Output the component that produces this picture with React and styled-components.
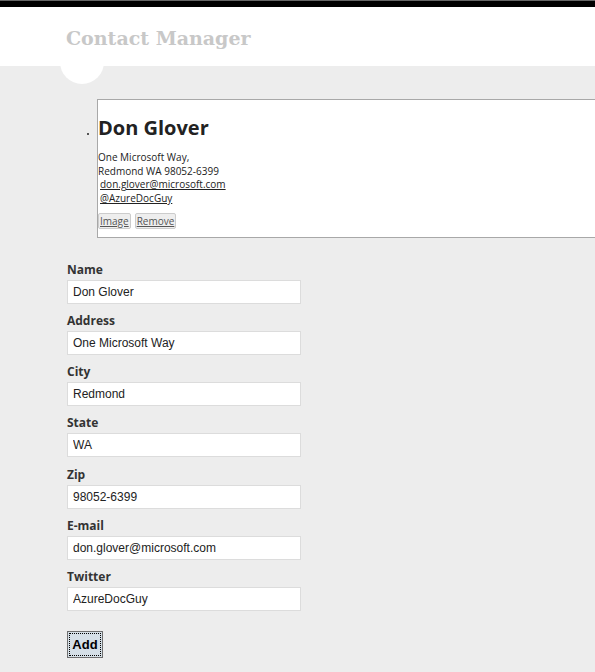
import React from 'react'
import styled, { createGlobalStyle } from 'styled-components'

const GlobalStyle = createGlobalStyle`
  html, body {
    margin: 0;
    padding: 0;
    background: #ededed;
    overflow-x: hidden;
  }
`

const contact = {
  name: 'Don Glover',
  address: 'One Microsoft Way',
  city: 'Redmond',
  state: 'WA',
  zip: '98052-6399',
  email: 'don.glover@microsoft.com',
  twitter: 'AzureDocGuy',
}

const fields = [
  ['Name', 'name'],
  ['Address', 'address'],
  ['City', 'city'],
  ['State', 'state'],
  ['Zip', 'zip'],
  ['E-mail', 'email'],
  ['Twitter', 'twitter'],
]

export default function App() {
  return <Page>
    <GlobalStyle />
    <Stripe />
    <Header>
      <Title>Contact Manager</Title>
    </Header>
    <Main>
      <Contacts>
        <ContactItem>
          <Card>
            <Name>{contact.name}</Name>
            <Info>
              {contact.address},<br />
              {contact.city} {contact.state} {contact.zip}<br />
              <LinkText href="#">{contact.email}</LinkText><br />
              <LinkText href="#">@{contact.twitter}</LinkText>
            </Info>
            <Actions>
              <SmallButton>Image</SmallButton>
              <SmallButton>Remove</SmallButton>
            </Actions>
          </Card>
        </ContactItem>
      </Contacts>

      <Form>
        {fields.map(([label, key]) => (
          <Field key={key}>
            <Label>{label}</Label>
            <Input defaultValue={contact[key]} />
          </Field>
        ))}
        <AddButton>Add</AddButton>
      </Form>
    </Main>
  </Page>
}

const Page = styled.div`
  min-height: 672px;
  background: #ededed;
`

const Stripe = styled.div`
  height: 6px;
  background: #000;
  border-top: 1px solid #666;
`

const Header = styled.header`
  position: relative;
  height: 59px;
  background: #fff;
  padding-left: 66px;
  box-sizing: border-box;

  &::after {
    content: '';
    position: absolute;
    left: 60px;
    top: 33px;
    width: 44px;
    height: 44px;
    border-radius: 50%;
    background: #fff;
  }
`

const Title = styled.h1`
  position: relative;
  z-index: 1;
  margin: 0;
  padding-top: 19px;
  font-family: "DejaVu Serif", "Liberation Serif", serif;
  font-size: 19px;
  font-weight: bold;
  line-height: 24px;
  color: #c8c8c8;
`

const Main = styled.main`
  padding: 0 0 16px 67px;
`

const Contacts = styled.ul`
  margin: 33px 0 24px 0;
  padding-left: 30px;
  list-style: disc;
`

const ContactItem = styled.li`
  font-size: 6px;
  color: #222;
`

const Card = styled.div`
  width: 540px;
  border: 1px solid #a8a8a8;
  background: #fff;
  padding: 14px 0 8px 0;
  font-family: "Open Sans", "Noto Sans", sans-serif;
`

const Name = styled.h2`
  margin: 0 0 10px 0;
  font-size: 20px;
  font-weight: bold;
  line-height: 27px;
  color: #222;
`

const Info = styled.div`
  font-size: 10px;
  line-height: 13.7px;
  color: #222;
`

const LinkText = styled.a`
  margin-left: 2px;
  color: #222;
  text-decoration: underline;
`

const Actions = styled.div`
  display: flex;
  gap: 4px;
  margin-top: 7px;
`

const SmallButton = styled.button`
  font-family: "Open Sans", "Noto Sans", sans-serif;
  font-size: 10px;
  line-height: 12px;
  color: #555;
  text-decoration: underline;
  background: #eee;
  border: 1px solid #ccc;
  border-radius: 2px;
  padding: 1px 1px;
`

const Form = styled.div`
  display: flex;
  flex-direction: column;
  align-items: flex-start;
`

const Field = styled.div`
  display: flex;
  flex-direction: column;
  margin-bottom: 9.2px;
`

const Label = styled.label`
  font-family: "Open Sans", "Noto Sans", sans-serif;
  font-size: 12px;
  font-weight: bold;
  line-height: 16px;
  color: #333;
  margin-bottom: 2px;
`

const Input = styled.input`
  width: 234px;
  height: 24px;
  box-sizing: border-box;
  border: 1px solid #dcdcdc;
  background: #fff;
  padding: 0 5px;
  font-family: "Liberation Sans", Arial, sans-serif;
  font-size: 12px;
  color: #222;
  outline: none;
`

const AddButton = styled.button`
  margin-top: 11px;
  width: 36px;
  height: 27px;
  background: #d5dfe7;
  border: 1px solid #6f6f6f;
  outline: 1px dotted #000;
  outline-offset: -3px;
  font-family: "Liberation Sans", Arial, sans-serif;
  font-size: 13px;
  font-weight: bold;
  color: #000;
  padding: 0;
`
